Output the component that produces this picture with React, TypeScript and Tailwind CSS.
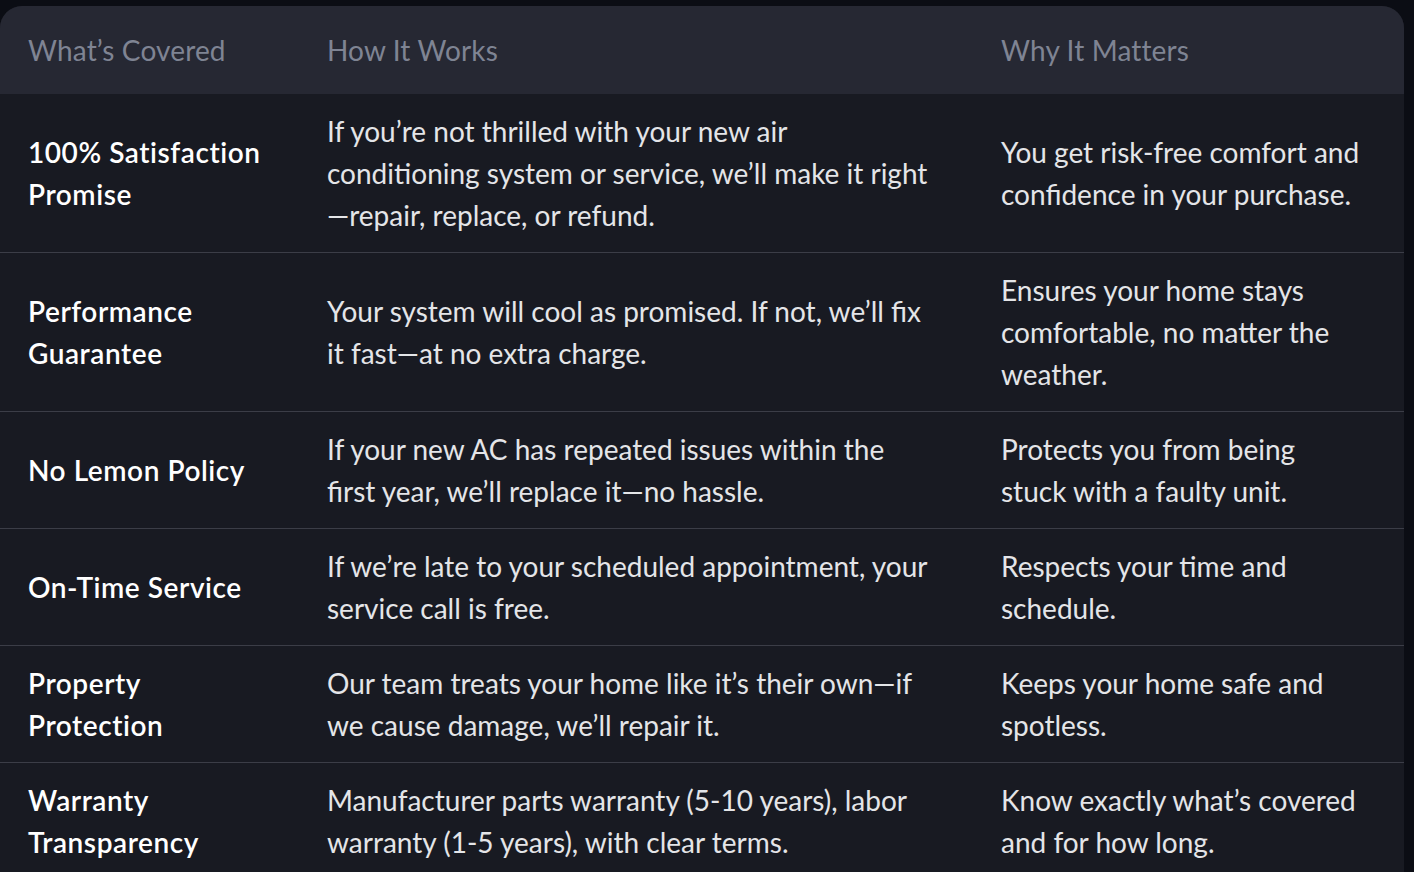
const rows: { title: string[]; how: string[]; why: string[] }[] = [
  {
    title: ['100% Satisfaction', 'Promise'],
    how: [
      'If you’re not thrilled with your new air',
      'conditioning system or service, we’ll make it right',
      '—repair, replace, or refund.',
    ],
    why: ['You get risk-free comfort and', 'confidence in your purchase.'],
  },
  {
    title: ['Performance', 'Guarantee'],
    how: ['Your system will cool as promised. If not, we’ll fix', 'it fast—at no extra charge.'],
    why: ['Ensures your home stays', 'comfortable, no matter the', 'weather.'],
  },
  {
    title: ['No Lemon Policy'],
    how: ['If your new AC has repeated issues within the', 'first year, we’ll replace it—no hassle.'],
    why: ['Protects you from being', 'stuck with a faulty unit.'],
  },
  {
    title: ['On-Time Service'],
    how: ['If we’re late to your scheduled appointment, your', 'service call is free.'],
    why: ['Respects your time and', 'schedule.'],
  },
  {
    title: ['Property', 'Protection'],
    how: ['Our team treats your home like it’s their own—if', 'we cause damage, we’ll repair it.'],
    why: ['Keeps your home safe and', 'spotless.'],
  },
  {
    title: ['Warranty', 'Transparency'],
    how: ['Manufacturer parts warranty (5-10 years), labor', 'warranty (1-5 years), with clear terms.'],
    why: ['Know exactly what’s covered', 'and for how long.'],
  },
];

function Lines({ lines }: { lines: string[] }) {
  return (
    <>
      {lines.map((l, i) => (
        <span key={i} className="block whitespace-nowrap">
          {l}
        </span>
      ))}
    </>
  );
}

export default function App() {
  return (
    <div className="min-h-screen bg-[#0b0d14] pt-[6px] pr-[10px] overflow-hidden font-['Lato','Liberation_Sans',sans-serif]">
      <div className="rounded-t-[22px] overflow-hidden bg-[#181a22]">
        <div className="grid grid-cols-[299px_674px_1fr] bg-[#262833] text-[#7f8493] text-[28px] leading-[42px] tracking-[0.005em]">
          <div className="px-[28px] py-[23px]">What’s Covered</div>
          <div className="px-[28px] py-[23px]">How It Works</div>
          <div className="px-[28px] py-[23px]">Why It Matters</div>
        </div>
        {rows.map((r, i) => (
          <div
            key={i}
            className={`grid grid-cols-[299px_674px_1fr] items-center text-[28px] leading-[42px] ${
              i > 0 ? 'border-t border-[#3b3d47]' : ''
            }`}
          >
            <div className="px-[28px] py-[16px] font-semibold tracking-[0.02em] text-white">
              <Lines lines={r.title} />
            </div>
            <div className="px-[28px] py-[16px] text-[#e4e5e8]">
              <Lines lines={r.how} />
            </div>
            <div className="px-[28px] py-[16px] text-[#e4e5e8]">
              <Lines lines={r.why} />
            </div>
          </div>
        ))}
      </div>
    </div>
  );
}
